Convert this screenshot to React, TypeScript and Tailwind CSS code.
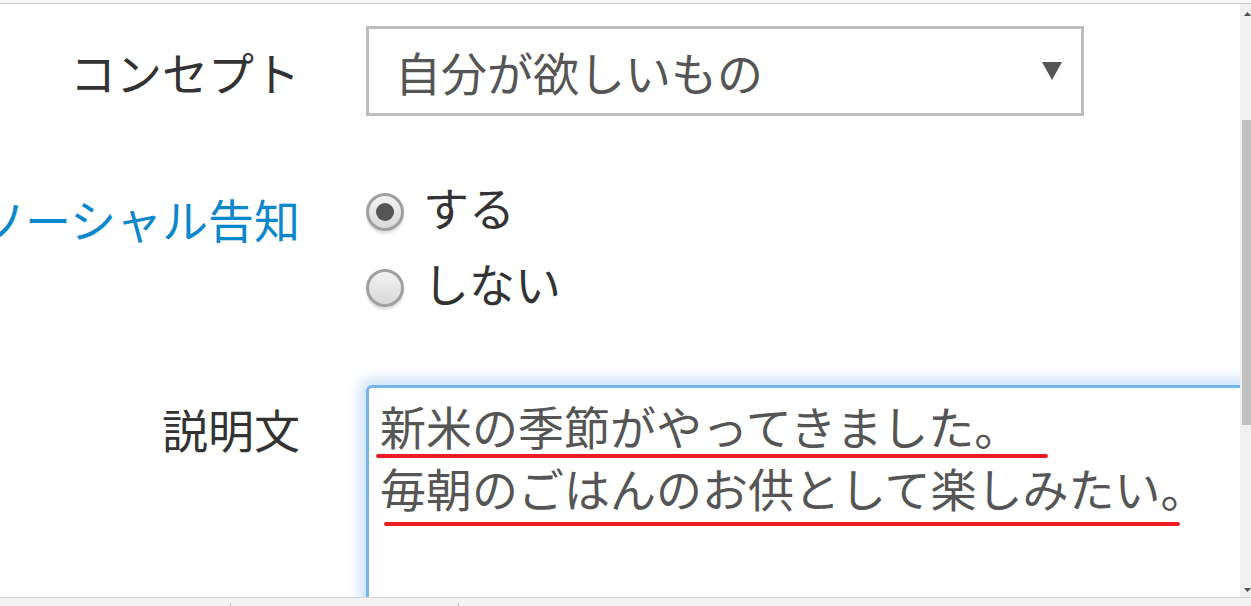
import React from 'react'

const font = "font-['Noto_Sans_CJK_JP','Noto_Sans',sans-serif]"

function Radio({ checked }: { checked?: boolean }) {
  return (
    <span className="flex h-[38px] w-[38px] shrink-0 items-center justify-center rounded-full border-[3px] border-[#a0a0a0] bg-gradient-to-b from-[#f2f2f2] to-[#d9d9d9] shadow-[0_3px_2px_rgba(0,0,0,0.12)]">
      {checked && <span className="h-[18px] w-[18px] rounded-full bg-[#555]" />}
    </span>
  )
}

function Scrollbar() {
  return (
    <div className="flex w-[11px] shrink-0 flex-col bg-[#f0f0f0]">
      <div className="flex justify-end pt-[8px]">
        <svg width="7" height="4" viewBox="0 0 7 4">
          <polygon points="3.5,0 7,4 0,4" fill="#505050" />
        </svg>
      </div>
      <div className="ml-[2px] mt-[104px] h-[305px] bg-[#c1c1c1]" />
      <div className="flex-1" />
      <div className="flex justify-end pb-[5px]">
        <svg width="7" height="4" viewBox="0 0 7 4">
          <polygon points="0,0 7,0 3.5,4" fill="#505050" />
        </svg>
      </div>
    </div>
  )
}

export default function App() {
  return (
    <div className={`flex h-[606px] w-full flex-col overflow-hidden bg-white ${font}`}>
      <div className="h-[3px] bg-[#f7f7f7]" />
      <div className="h-px bg-[#c9c9c9]" />

      <div className="flex min-h-0 flex-1">
        <div className="min-w-0 flex-1 overflow-hidden">
          {/* concept */}
          <div className="mt-[22px] flex h-[90px] items-center">
            <label className="w-[300px] shrink-0 text-right text-[46px] leading-[60px] text-[#333]">コンセプト</label>
            <div className="ml-[66px] flex h-full w-[718px] shrink-0 items-center justify-between border-[3px] border-[#bdbdbd] pl-[26px] pr-[19px]">
              <span className="text-[46px] leading-[60px] text-[#555]">自分が欲しいもの</span>
              <svg width="20" height="20" viewBox="0 0 20 20">
                <polygon points="0,1 20,1 10,19" fill="#555" />
              </svg>
            </div>
          </div>

          {/* social */}
          <div className="mt-[58px] flex">
            <label className="mt-[14px] flex h-[60px] w-[300px] shrink-0 justify-end overflow-hidden whitespace-nowrap text-[46px] leading-[60px] text-[#0b87cc]">
              <span className="shrink-0">ソーシャル告知</span>
            </label>
            <div className="ml-[66px] flex flex-col">
              <div className="flex h-[76px] items-center">
                <Radio checked />
                <span className="ml-[19px] pb-[12px] text-[46px] leading-[60px] text-[#333]">する</span>
              </div>
              <div className="flex h-[76px] items-center">
                <Radio />
                <span className="ml-[19px] pb-[12px] text-[46px] leading-[60px] text-[#333]">しない</span>
              </div>
            </div>
          </div>

          {/* description */}
          <div className="mt-[59px] flex">
            <label className="mt-[13px] h-[60px] w-[300px] shrink-0 text-right text-[46px] leading-[60px] text-[#333]">説明文</label>
            <div className="relative ml-[66px] h-[300px] w-[1000px] shrink-0 rounded-tl-[6px] border-[3px] border-[#74b4ef] pl-[11px] pt-[6px] shadow-[0_0_14px_6px_rgba(120,180,240,0.4)]">
              <p className="text-[46px] leading-[62px] text-[#555]">新米の季節がやってきました。</p>
              <p className="text-[46px] leading-[62px] text-[#555]">毎朝のごはんのお供として楽しみたい。</p>
              <div className="absolute left-[7px] top-[66px] h-[4px] w-[672px] rounded-full bg-[#ee1c25]" />
              <div className="absolute left-[15px] top-[134px] h-[4px] w-[796px] rounded-full bg-[#ee1c25]" />
            </div>
          </div>
        </div>
        <Scrollbar />
      </div>

      <div className="h-px bg-[#d4d4d4]" />
      <div className="flex h-[8px] bg-[#f2f2f2]">
        <div className="ml-[230px] h-[3px] w-px self-end bg-[#b5b5b5]" />
        <div className="ml-[227px] h-[3px] w-px self-end bg-[#b5b5b5]" />
      </div>
    </div>
  )
}
